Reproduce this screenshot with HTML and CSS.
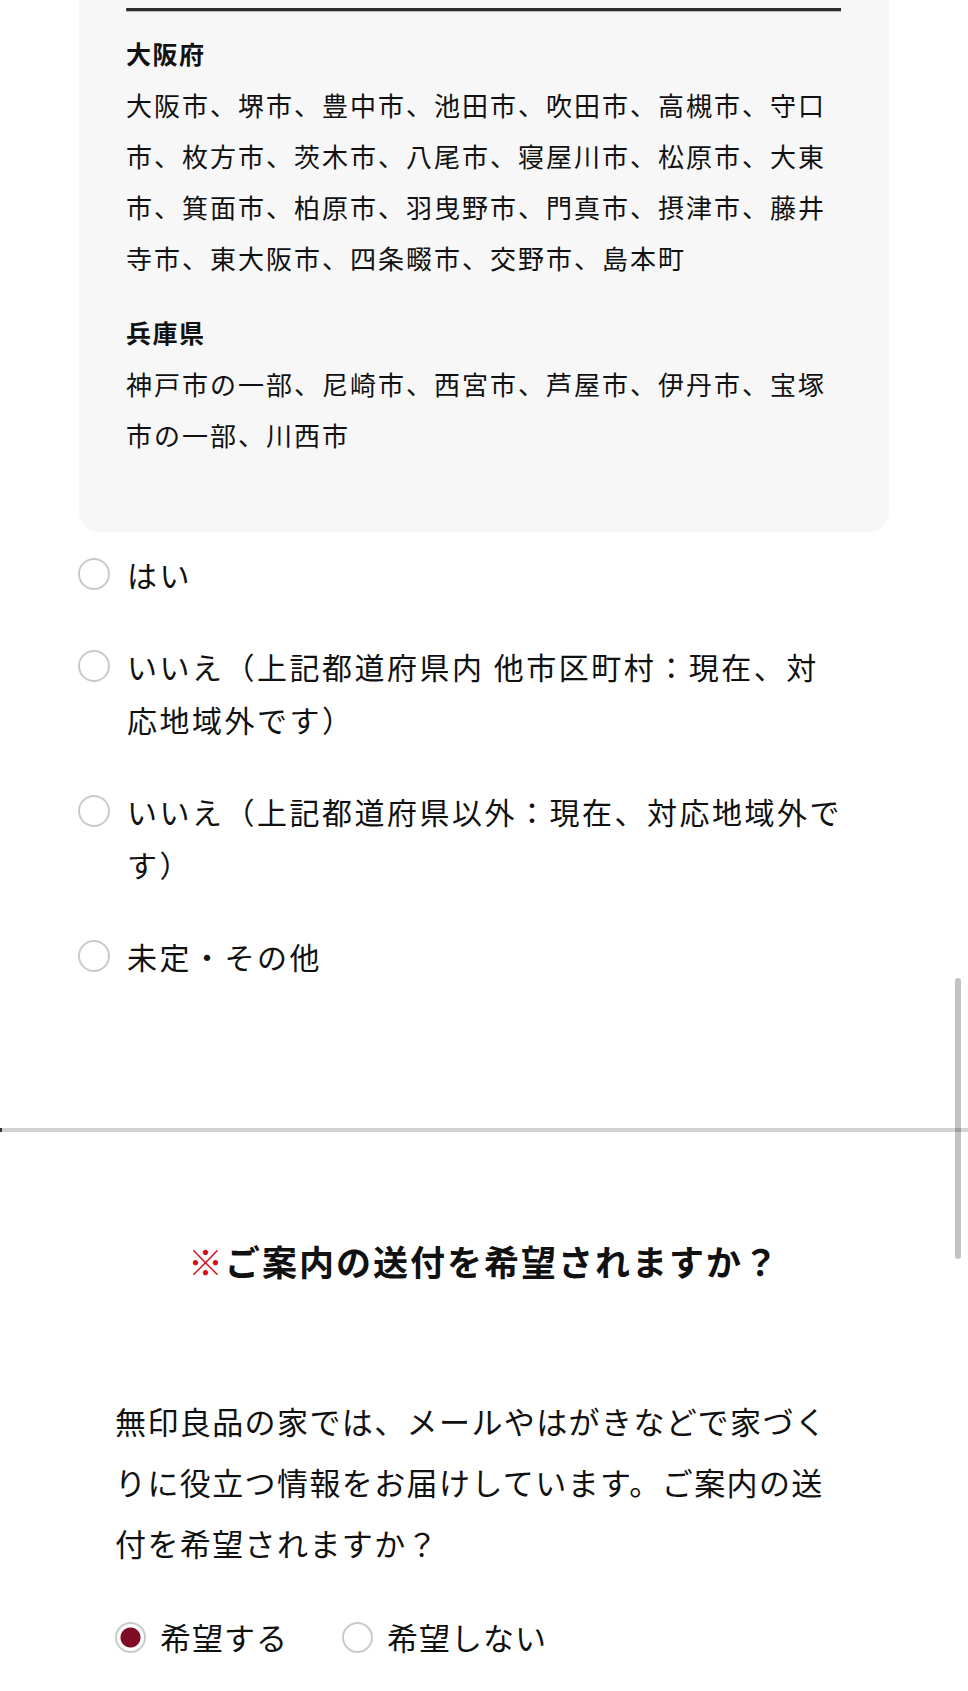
FILE: index.html
```html
<!DOCTYPE html>
<html lang="ja">
<head>
  <meta charset="UTF-8" />
  <meta name="viewport" content="width=device-width,initial-scale=1" />
  <title>無印良品の家 – お問い合わせ</title>
  <link rel="stylesheet" href="styles.css">
</head>
<body>
  <!-- Service area card -->
  <div class="area-card">
    <div class="card-rule"></div>
    <h3 class="pref">大阪府</h3>
    <p class="cities">大阪市、堺市、豊中市、池田市、吹田市、高槻市、守口市、枚方市、茨木市、八尾市、寝屋川市、松原市、大東市、箕面市、柏原市、羽曳野市、門真市、摂津市、藤井寺市、東大阪市、四条畷市、交野市、島本町</p>
    <h3 class="pref pref-next">兵庫県</h3>
    <p class="cities">神戸市の一部、尼崎市、西宮市、芦屋市、伊丹市、宝塚市の一部、川西市</p>
  </div>

  <!-- Area answer -->
  <div class="choices">
    <label class="choice">
      <input type="radio" name="area" class="radio" />
      <span class="choice-text">はい</span>
    </label>
    <label class="choice">
      <input type="radio" name="area" class="radio" />
      <span class="choice-text">いいえ（上記都道府県内 他市区町村：現在、対応地域外です）</span>
    </label>
    <label class="choice">
      <input type="radio" name="area" class="radio" />
      <span class="choice-text">いいえ（上記都道府県以外：現在、対応地域外です）</span>
    </label>
    <label class="choice">
      <input type="radio" name="area" class="radio" />
      <span class="choice-text">未定・その他</span>
    </label>
  </div>

  <hr class="divider" />

  <!-- Mail question -->
  <section class="mail-section">
    <h2 class="q-title"><span class="req">※</span>ご案内の送付を希望されますか？</h2>
    <p class="q-text">無印良品の家では、メールやはがきなどで家づくりに役立つ情報をお届けしています。ご案内の送付を希望されますか？</p>
    <div class="inline-choices">
      <label class="inline-choice">
        <input type="radio" name="mail" class="radio radio-sm" checked />
        <span>希望する</span>
      </label>
      <label class="inline-choice">
        <input type="radio" name="mail" class="radio radio-sm" />
        <span>希望しない</span>
      </label>
    </div>
  </section>

  <div class="scroll-indicator"></div>
</body>
</html>
```

FILE: styles.css
```css
* {
  margin: 0;
  padding: 0;
  box-sizing: border-box;
}

body {
  position: relative;
  width: 968px;
  height: 1691px;
  overflow: hidden;
  background: #fff;
  color: #111;
  font-family: "Noto Sans CJK JP", "Noto Sans", sans-serif;
}

/* area card */
.area-card {
  margin: 0 79px;
  padding: 8px 48px 72px 47px;
  background: #f7f7f7;
  border-radius: 0 0 20px 20px;
}

.card-rule {
  height: 3px;
  background: #2b2b2b;
  border-left: 1px solid #555;
  box-shadow: 0 1px 1px rgba(0,0,0,.25);
  margin-bottom: 17px;
}

.pref {
  font-size: 25px;
  font-weight: bold;
  line-height: 51px;
  letter-spacing: 1.5px;
}

.pref-next {
  margin-top: 24px;
}

.cities {
  font-size: 26px;
  line-height: 51px;
  letter-spacing: 2px;
}

/* vertical radios */
.choices {
  display: flex;
  flex-direction: column;
  gap: 39px;
  margin-top: 16px;
  padding: 0 119px 0 78px;
}

.choice {
  display: flex;
  align-items: flex-start;
  gap: 17px;
}

.choice .radio {
  margin-top: 10px;
}

.choice-text {
  font-size: 30px;
  line-height: 53px;
  letter-spacing: 2.5px;
}

.radio {
  appearance: none;
  -webkit-appearance: none;
  flex: none;
  width: 32px;
  height: 32px;
  border: 2px solid #cacaca;
  border-radius: 50%;
  background: #fff;
}

.radio-sm {
  width: 31px;
  height: 31px;
}

.radio:checked {
  background: radial-gradient(circle, #800b24 0 9.5px, #fff 10.5px);
}

.divider {
  border: none;
  height: 4px;
  margin-top: 145px;
  background: #d2d2d2;
  border-left: 2px solid #333;
}

/* mail section */
.mail-section {
  padding: 0 115px;
}

.q-title {
  margin-top: 104px;
  text-align: center;
  font-size: 35px;
  font-weight: bold;
  line-height: 50px;
  letter-spacing: 2px;
}

.req {
  color: #d0101b;
  font-weight: normal;
}

.q-text {
  margin-top: 104px;
  font-size: 31px;
  line-height: 61px;
  letter-spacing: 1.4px;
}

.inline-choices {
  display: flex;
  gap: 54px;
  margin-top: 39px;
}

.inline-choice {
  display: flex;
  align-items: center;
  gap: 14px;
  font-size: 31px;
  line-height: 50px;
  letter-spacing: 1px;
}

.scroll-indicator {
  position: absolute;
  right: 7px;
  top: 978px;
  width: 6px;
  height: 281px;
  border-radius: 3px;
  background: rgba(0,0,0,.24);
}
```
